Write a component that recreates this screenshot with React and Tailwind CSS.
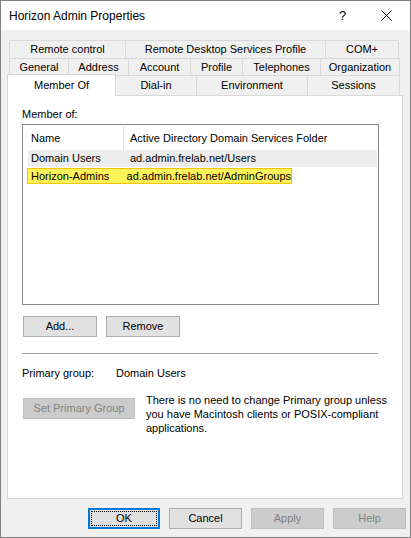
import React from 'react';

const font = { fontFamily: '"Liberation Sans", Arial, sans-serif' };

const row1 = [
  { label: 'Remote control', w: 'w-[117px]' },
  { label: 'Remote Desktop Services Profile', w: 'w-[201px]' },
  { label: 'COM+', w: 'w-[74px]' },
];
const row2 = [
  { label: 'General', w: 'w-[60px]' },
  { label: 'Address', w: 'w-[61px]' },
  { label: 'Account', w: 'w-[63px]' },
  { label: 'Profile', w: 'w-[53px]' },
  { label: 'Telephones', w: 'w-[79px]' },
  { label: 'Organization', w: 'w-[80px]' },
];
const row3 = [
  { label: 'Dial-in', w: 'w-[82px]' },
  { label: 'Environment', w: 'w-[112px]' },
  { label: 'Sessions', w: 'w-[93px]' },
];

const Tab = ({ label, w, h }) => (
  <div
    className={`${w} ${h} -ml-px first:ml-0 border border-b-0 border-[#d9d9d9] bg-[#f0f0f0] flex items-center justify-center text-[11px] text-black`}
  >
    {label}
  </div>
);

const Btn = ({ children, w = 'w-[74px]', disabled, focused }) => {
  if (focused) {
    return (
      <div className={`${w} h-[21px] border-2 border-[#0078d7] bg-[#e1e1e1] p-px`}>
        <div className="w-full h-full border border-dotted border-black flex items-center justify-center text-[11px]">
          {children}
        </div>
      </div>
    );
  }
  return (
    <div
      className={`${w} h-[21px] border flex items-center justify-center text-[11px] ${
        disabled
          ? 'bg-[#cccccc] border-[#bfbfbf] text-[#838383]'
          : 'bg-[#e1e1e1] border-[#adadad] text-black'
      }`}
    >
      {children}
    </div>
  );
};

export default function App() {
  return (
    <div
      className="w-[411px] h-[538px] border border-[#7f7f7f] bg-[#f0f0f0] flex flex-col overflow-hidden"
      style={font}
    >
      {/* Title bar */}
      <div className="h-[29px] bg-white flex items-center pl-[8px] shrink-0">
        <span className="text-[12px] text-black flex-1 pt-px">Horizon Admin Properties</span>
        <span className="text-[13px] text-black w-[8px] mr-[34px] leading-none">?</span>
        <svg width="11" height="11" viewBox="0 0 11 11" className="mr-[18px]">
          <path d="M0.5 0.5 L10.5 10.5 M10.5 0.5 L0.5 10.5" stroke="#000" strokeWidth="1" />
        </svg>
      </div>

      {/* Body */}
      <div className="flex flex-col pl-[6px] pt-[10px]">
        <div className="pl-[2px] flex flex-col">
          <div className="flex">
            {row1.map((t) => (
              <Tab key={t.label} {...t} h="h-[18px]" />
            ))}
          </div>
          <div className="flex">
            {row2.map((t) => (
              <Tab key={t.label} {...t} h="h-[17px]" />
            ))}
          </div>
        </div>
        <div className="flex items-end h-[20px]">
          <div className="w-[109px] h-[22px] bg-white border border-b-0 border-[#d9d9d9] flex items-start pt-[2px] justify-center text-[11px] relative z-10 top-px">
            Member Of
          </div>
          <div className="flex h-[20px] -ml-px">
            {row3.map((t) => (
              <Tab key={t.label} {...t} h="h-[20px]" />
            ))}
          </div>
        </div>

        {/* Tab page */}
        <div className="w-[396px] h-[404px] bg-white border border-[#d9d9d9] flex flex-col pl-[14px] text-[11px] text-black">
          <div className="mt-[12px] h-[13px] leading-[13px]">Member of:</div>
          <div className="mt-[3px] w-[357px] h-[181px] border border-[#828790] bg-white flex flex-col pl-[5px] pr-px pt-px">
            <div className="flex h-[24px] items-center">
              <div className="w-[96px] pl-[3px] h-full flex items-center border-r border-[#e5e5e5]">Name</div>
              <div className="pl-[6px]">Active Directory Domain Services Folder</div>
            </div>
            <div className="flex h-[17px] items-center bg-[#ededed]">
              <div className="w-[97px] pl-[3px]">Domain Users</div>
              <div className="pl-[5px]">ad.admin.frelab.net/Users</div>
            </div>
            <div className="flex h-[16px] mt-px items-center bg-[#fff35a] border border-[#f5c400] w-[265px] -ml-px">
              <div className="w-[97px] pl-[3px]">Horizon-Admins</div>
              <div className="pl-[5px]">ad.admin.frelab.net/AdminGroups</div>
            </div>
          </div>

          <div className="flex gap-[9px] mt-[11px] pl-px">
            <Btn>Add...</Btn>
            <Btn>Remove</Btn>
          </div>

          <div className="mt-[16px] w-[356px] h-px bg-[#a0a0a0]" />

          <div className="flex mt-[12px] h-[14px] items-center">
            <div className="w-[94px]">Primary group:</div>
            <div>Domain Users</div>
          </div>

          <div className="flex mt-[18px] pl-px">
            <Btn w="w-[112px]" disabled>
              Set Primary Group
            </Btn>
            <div className="ml-[11px] -mt-[5px] leading-[14px] w-[246px]">
              There is no need to change Primary group unless you have Macintosh clients or POSIX-compliant
              applications.
            </div>
          </div>
        </div>

        {/* Dialog buttons */}
        <div className="flex gap-[9px] mt-[9px] pl-[81px]">
          <Btn w="w-[72px]" focused>
            OK
          </Btn>
          <Btn w="w-[73px]">Cancel</Btn>
          <Btn w="w-[73px]" disabled>
            Apply
          </Btn>
          <Btn w="w-[73px]" disabled>
            Help
          </Btn>
        </div>
      </div>
    </div>
  );
}
